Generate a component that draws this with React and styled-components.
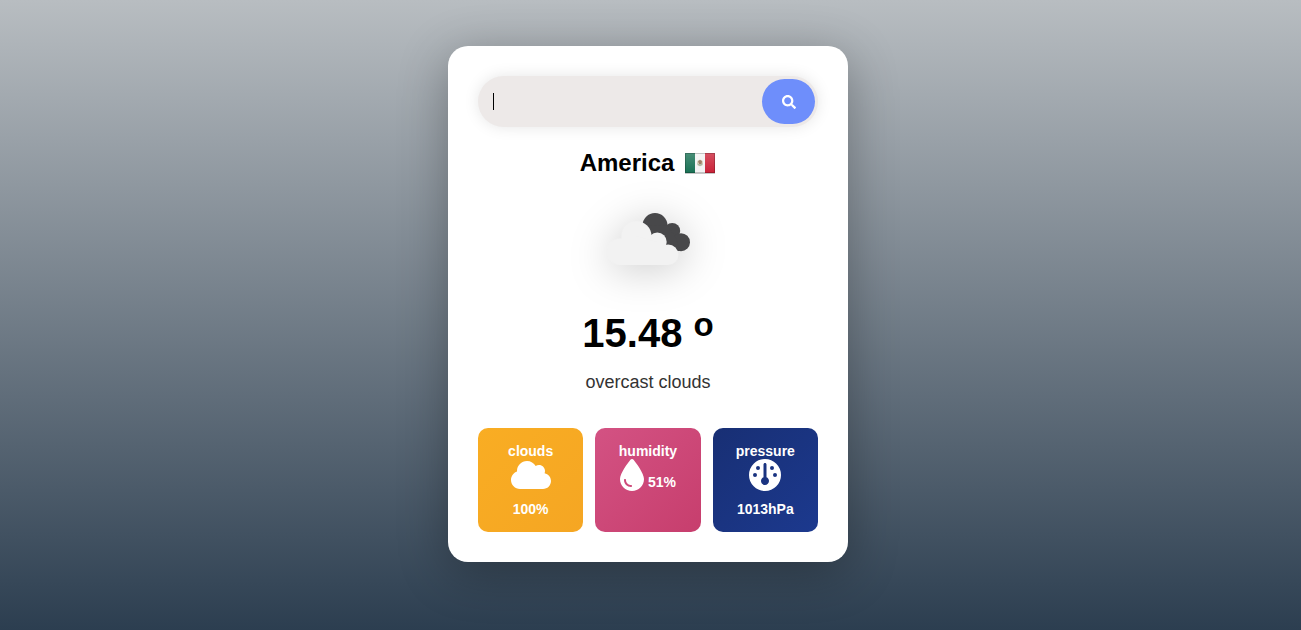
import React from "react";
import styled, { createGlobalStyle } from "styled-components";
import { FaCloud, FaDroplet, FaGauge } from "react-icons/fa6";
import { FaSearch } from "react-icons/fa";

const GlobalStyle = createGlobalStyle`
  * { box-sizing: border-box; }
  body {
    margin: 0;
    font-family: "Liberation Sans", Arial, sans-serif;
    background: #2c3e50;
  }
`;

const Page = styled.main`
  display: flex;
  justify-content: center;
  align-items: flex-start;
  min-height: 100vh;
  padding: 46px 20px 46px 15px;
  background: linear-gradient(to bottom, #b8bdc1, #2c3e50);
`;

const Card = styled.section`
  display: flex;
  flex-direction: column;
  align-items: center;
  width: 100%;
  max-width: 400px;
  padding: 30px;
  border-radius: 20px;
  background: #fff;
  box-shadow: 0 10px 50px rgba(0, 0, 0, 0.3);
`;

const SearchBar = styled.form`
  display: flex;
  align-items: center;
  width: 100%;
  height: 51px;
  padding: 3px 3px 3px 15px;
  border-radius: 26px;
  background: #ede9e8;
  box-shadow: 0 0 15px rgba(0, 0, 0, 0.1);
`;

const Caret = styled.span`
  flex: none;
  width: 1px;
  height: 17px;
  background: #000;
`;

const SearchInput = styled.input`
  flex: 1;
  min-width: 0;
  height: 100%;
  padding: 0;
  border: 0;
  outline: 0;
  background: transparent;
  font: inherit;
  font-size: 15px;
`;

const SearchButton = styled.button`
  display: flex;
  align-items: center;
  justify-content: center;
  width: 53px;
  height: 45px;
  padding: 0;
  border: 0;
  border-radius: 23px;
  background: #6e8efb;
  color: #fff;
  font-size: 14px;
  cursor: pointer;
`;

const Place = styled.h1`
  display: flex;
  align-items: center;
  gap: 10px;
  margin: 20px 0 0;
  font-size: 24px;
  line-height: 32px;
`;

const Flag = styled.svg`
  width: 32px;
  height: 32px;
`;

const SkyIcon = styled.svg`
  width: 100px;
  height: 100px;
  margin-top: 11px;
  filter: drop-shadow(0 5px 20px rgba(0, 0, 0, 0.2));
`;

const Temperature = styled.h2`
  display: flex;
  gap: 11px;
  margin: 20px 0 0;
  font-size: 40px;
  line-height: 46px;
`;

const Degree = styled.sup`
  font-size: 33px;
  line-height: 30px;
`;

const Description = styled.p`
  margin: 16px 0 0;
  color: #333;
  font-size: 18px;
  line-height: 20px;
`;

const Stats = styled.div`
  display: grid;
  grid-template-columns: repeat(3, 1fr);
  gap: 12px;
  width: 100%;
  margin-top: 36px;
`;

const Stat = styled.article`
  height: 104px;
  padding: 15px;
  border-radius: 10px;
  background: linear-gradient(135deg, ${(p) => p.$from}, ${(p) => p.$to});
  color: #fff;
  text-align: center;
`;

const StatName = styled.h3`
  margin: 0;
  font-size: 14px;
  line-height: 16px;
`;

const Reading = styled.div`
  display: flex;
  flex-direction: ${(p) => (p.$inline ? "row" : "column")};
  align-items: center;
  justify-content: center;
  gap: ${(p) => (p.$inline ? "4px" : "10px")};

  svg {
    width: ${(p) => p.$iconWidth}px;
    height: 32px;
  }
`;

const Value = styled.strong`
  font-size: 14px;
  line-height: 16px;
  ${(p) => p.$inline && "padding-top: 14px;"}
`;

const stats = [
  { name: "clouds", value: "100%", icon: <FaCloud />, iconWidth: 40, from: "#f9ad23", to: "#f5a623" },
  { name: "humidity", value: "51%", icon: <FaDroplet />, iconWidth: 24, from: "#d35283", to: "#c73e6d", inline: true },
  { name: "pressure", value: "1013hPa", icon: <FaGauge />, iconWidth: 32, from: "#182f74", to: "#1c398e" },
];

function MexicoFlag() {
  return (
    <Flag viewBox="0 0 32 32" role="img" aria-label="Mexico">
      <defs>
        <linearGradient id="gloss" x1="0" y1="0" x2="0" y2="1">
          <stop offset="0" stopColor="#fff" stopOpacity="0.24" />
          <stop offset="1" stopColor="#fff" stopOpacity="0.04" />
        </linearGradient>
      </defs>
      <rect x="1" y="6" width="30" height="21" fill="#000" opacity="0.22" />
      <rect x="1" y="6" width="10" height="20" fill="#0f6b4d" />
      <rect x="11" y="6" width="10" height="20" fill="#f2f2f2" />
      <rect x="21" y="6" width="10" height="20" fill="#c8182f" />
      <ellipse cx="16" cy="16" rx="3" ry="3.2" fill="#d3c7b0" />
      <path d="M14 14.5l2-1.8 2 1.5-.5 2.8-2 .6z" fill="#8b6a4c" />
      <path d="M13.5 17q2.5 3 5 0" fill="none" stroke="#8fae96" />
      <rect x="1" y="6" width="30" height="20" fill="url(#gloss)" />
      <rect x="1.5" y="6.5" width="29" height="19" fill="none" stroke="#000" strokeOpacity="0.2" />
    </Flag>
  );
}

function OvercastIcon() {
  return (
    <SkyIcon viewBox="0 0 100 100" role="img" aria-label="overcast clouds">
      <g fill="#48484a">
        <circle cx="57" cy="35.5" r="12.5" />
        <circle cx="74.2" cy="41" r="8" />
        <circle cx="83" cy="52.2" r="9" />
        <path d="M50 36L69 35L78 48L82 61L62 60Z" />
      </g>
      <g fill="#f2f2f2">
        <circle cx="22.6" cy="61.7" r="13.3" />
        <circle cx="38.5" cy="46.2" r="15" />
        <circle cx="59.3" cy="52" r="9.4" />
        <circle cx="70.1" cy="64.7" r="10.3" />
        <path d="M23 52L38 46L59 52L70 64V75H23Z" />
      </g>
    </SkyIcon>
  );
}

export default function App() {
  return (
    <>
      <GlobalStyle />
      <Page>
        <Card>
          <SearchBar onSubmit={(e) => e.preventDefault()}>
            <Caret />
            <SearchInput type="text" aria-label="City" />
            <SearchButton type="submit" aria-label="Search">
              <FaSearch />
            </SearchButton>
          </SearchBar>
          <Place>
            America <MexicoFlag />
          </Place>
          <OvercastIcon />
          <Temperature>
            15.48 <Degree>o</Degree>
          </Temperature>
          <Description>overcast clouds</Description>
          <Stats>
            {stats.map((s) => (
              <Stat key={s.name} $from={s.from} $to={s.to}>
                <StatName>{s.name}</StatName>
                <Reading $inline={s.inline} $iconWidth={s.iconWidth}>
                  {s.icon}
                  <Value $inline={s.inline}>{s.value}</Value>
                </Reading>
              </Stat>
            ))}
          </Stats>
        </Card>
      </Page>
    </>
  );
}
